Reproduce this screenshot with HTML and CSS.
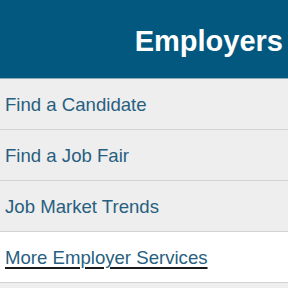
FILE: index.html
```html
<!DOCTYPE html>
<html>
<head>
<meta charset="utf-8">
<link rel="stylesheet" href="styles.css">
</head>
<body>
<div class="panel">
  <div class="header"><h2 class="title">Employers</h2></div>
  <ul class="links">
    <li class="item"><a class="link" href="#">Find a Candidate</a></li>
    <li class="item"><a class="link" href="#">Find a Job Fair</a></li>
    <li class="item"><a class="link" href="#">Job Market Trends</a></li>
    <li class="item item-more"><a class="link link-more" href="#">More Employer Services</a></li>
  </ul>
</div>
</body>
</html>
```
FILE: styles.css
```css
html, body {
  margin: 0;
  padding: 0;
  background: #eeeeee;
  font-family: "Liberation Sans", Arial, sans-serif;
}
.panel {
  width: 288px;
}
.header {
  height: 78px;
  background: #03587f;
  border-bottom: 1px solid #8fa9b6;
  display: flex;
  align-items: center;
  justify-content: flex-end;
  padding-right: 5px;
  box-sizing: content-box;
}
.title {
  margin: 0;
  color: #ffffff;
  font-size: 29px;
  font-weight: bold;
  line-height: 1;
  padding-top: 4px;
}
.links {
  list-style: none;
  margin: 0;
  padding: 0;
}
.item {
  height: 50px;
  background: #eeeeee;
  border-bottom: 1px solid #d3d3d3;
  display: flex;
  align-items: center;
  padding-left: 5px;
}
.item-more {
  background: #ffffff;
}
.link {
  color: #285f80;
  font-size: 18.6px;
  text-decoration: none;
  line-height: 1;
  padding-top: 3px;
}
.link-more {
  text-decoration: underline;
  text-decoration-color: #1a1a1a;
  text-decoration-thickness: 1.5px;
  text-underline-offset: 3px;
}
```
